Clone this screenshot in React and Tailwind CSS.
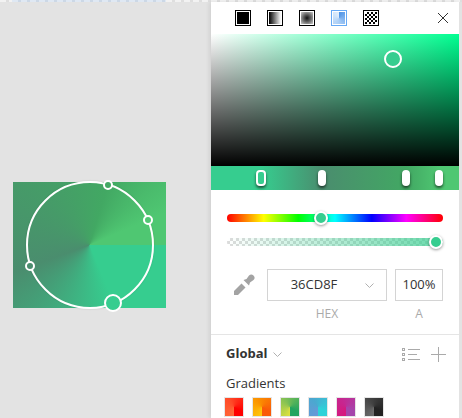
import React from 'react';

const font = { fontFamily: '"Open Sans", sans-serif' };

const Chevron = () => (
    <svg viewBox="0 0 9 5" className="w-[9px] h-[5px]" fill="none" stroke="#b0b0b0" strokeWidth="1">
        <path d="M0.5 0.5 L4.5 4.5 L8.5 0.5" />
    </svg>
);

const Handle = ({ className }) => (
    <div className={`absolute rounded-full border-2 border-white -translate-x-1/2 -translate-y-1/2 ${className}`} />
);

const Stop = ({ className = 'w-[8px] bg-white' }) => (
    <div className={`h-[16px] rounded-[4px] border-2 border-white shadow-[0_2px_3px_rgba(0,0,0,0.6)] ${className}`} />
);

const FillTypes = () => (
    <div className="flex items-center gap-[16px] pl-[24px]">
        <div className="w-[16px] h-[16px] border border-black p-px">
            <div className="w-full h-full bg-black" />
        </div>
        <div className="w-[16px] h-[16px] border border-black p-px">
            <div className="w-full h-full bg-[linear-gradient(90deg,#000,#fff)]" />
        </div>
        <div className="w-[16px] h-[16px] border border-black p-px">
            <div className="w-full h-full bg-[radial-gradient(circle,#111,#ccc)]" />
        </div>
        <div className="w-[16px] h-[16px] border border-[#66a9f5] p-px">
            <div className="w-full h-full bg-[conic-gradient(#4f94e6_0deg,#a9cdf6_180deg,#e3effc_360deg)]" />
        </div>
        <div className="w-[16px] h-[16px] border border-black p-px">
            <div className="w-full h-full bg-[repeating-conic-gradient(#000_0_25%,#fff_0_50%)] bg-[length:4px_4px]" />
        </div>
    </div>
);

const swatches = [
    'bg-[conic-gradient(from_180deg,#ff6a3a_0deg,#ff4a28_150deg,#ff0000_300deg,#ff0000_360deg)]',
    'bg-[conic-gradient(from_180deg,#ffc80c_0deg,#fb9200_150deg,#fa5a08_300deg,#fa5a08_360deg)]',
    'bg-[conic-gradient(from_180deg,#dfe13f_0deg,#7fbf55_150deg,#22a45f_300deg,#22a45f_360deg)]',
    'bg-[conic-gradient(from_180deg,#6a97d8_0deg,#4aa8d0_150deg,#2ed2d8_300deg,#2ed2d8_360deg)]',
    'bg-[conic-gradient(from_180deg,#d8177c_0deg,#c62690_150deg,#a545ab_300deg,#a545ab_360deg)]',
    'bg-[conic-gradient(from_180deg,#6e6e6e_0deg,#444444_150deg,#222222_300deg,#222222_360deg)]',
];

export default function App() {
    return (
        <div className="w-[462px] h-[418px] overflow-hidden bg-[#e3e3e3] flex flex-col" style={font}>
            {/* ruler along the top */}
            <div className="h-[2px] flex shrink-0">
                <div className="w-[12px] bg-[repeating-linear-gradient(90deg,#f2f2f2_0_6px,#dedede_6px_9px)]" />
                <div className="w-[154px] bg-[repeating-linear-gradient(90deg,#dfe8f3_0_6px,#ccd8e6_6px_9px)]" />
                <div className="flex-1 bg-[repeating-linear-gradient(90deg,#f2f2f2_0_6px,#dedede_6px_9px)]" />
            </div>

            <div className="flex flex-1 min-h-0">
                {/* canvas with the selected shape */}
                <div className="w-[211px] shrink-0 pl-[13px] pt-[180px]">
                    <div className="relative w-[153px] h-[126px] bg-[conic-gradient(from_90deg,#36cd8f_0deg,#36cd8f_67deg,#4a8d6e_160deg,#42a863_287deg,#4fc772_337deg,#4fc772_360deg)]">
                        <div className="absolute left-[13px] top-[-1px] w-[128px] h-[128px] rounded-full border-2 border-white shadow-[0_0_2px_rgba(0,0,0,0.15)]" />
                        <Handle className="left-[95px] top-[3px] w-[10px] h-[10px] bg-[#42a863]" />
                        <Handle className="left-[135px] top-[38px] w-[10px] h-[10px] bg-[#4fc772]" />
                        <Handle className="left-[17px] top-[84px] w-[10px] h-[10px] bg-[#4a8d6e]" />
                        <Handle className="left-[100px] top-[121px] w-[18px] h-[18px] bg-[#36cd8f]" />
                    </div>
                </div>

                {/* colour picker panel */}
                <div className="w-[248px] shrink-0 bg-white shadow-[-2px_0_4px_rgba(0,0,0,0.08)] flex flex-col">
                    <div className="h-[32px] flex items-center justify-between">
                        <FillTypes />
                        <svg viewBox="0 0 10 10" className="w-[10px] h-[10px] mr-[11px]" fill="none" stroke="#333" strokeWidth="1">
                            <path d="M0 0 L10 10 M10 0 L0 10" />
                        </svg>
                    </div>

                    <div className="relative h-[132px] bg-[linear-gradient(to_top,#000,transparent),linear-gradient(to_right,#fff,#00ff91)]">
                        <Handle className="left-[182px] top-[25px] w-[18px] h-[18px] bg-[#36cd8f]" />
                    </div>

                    <div className="h-[24px] flex items-center pl-[45px] bg-[linear-gradient(90deg,#36cd8f_0%,#36cd8f_20%,#4a8d6e_45%,#42a863_79%,#4fc772_92%)]">
                        <Stop className="w-[10px] rounded-[3px] bg-[#36cd8f]" />
                        <div className="ml-[52px]"><Stop /></div>
                        <div className="ml-[76px]"><Stop /></div>
                        <div className="ml-[25px]"><Stop /></div>
                    </div>

                    <div className="px-[16px] pt-[24px]">
                        <div className="relative h-[8px] rounded-full bg-[linear-gradient(90deg,#ff0000,#ffff00_17%,#00ff00_33%,#00ffff_50%,#0000ff_67%,#ff00ff_83%,#ff0000)]">
                            <Handle className="left-[94px] top-[4px] w-[14px] h-[14px] bg-[#36cd8f] shadow-[0_1px_3px_rgba(0,0,0,0.4)]" />
                        </div>
                        <div className="relative h-[8px] mt-[16px] rounded-full bg-[linear-gradient(90deg,rgba(54,205,143,0),rgba(54,205,143,0.75)),repeating-conic-gradient(#dcdcdc_0_25%,#fff_0_50%)] bg-[length:auto,6px_6px]">
                            <Handle className="left-[209px] top-[4px] w-[14px] h-[14px] bg-[#36cd8f] shadow-[0_1px_3px_rgba(0,0,0,0.4)]" />
                        </div>
                    </div>

                    <div className="flex pl-[22px] pr-[16px] pt-[23px]">
                        <svg viewBox="0 0 22 22" className="w-[22px] h-[22px] mt-[5px]" fill="#a3a3a3">
                            <path d="M10.5 6 L13.5 5 L16 1.5 a3 3 0 0 1 4.5 4.5 L17 8.5 L16 11.5 Z" />
                            <path d="M8.5 9.5 L12.5 13.5 L5 21 L1 21 L1 17 Z" />
                        </svg>
                        <div className="ml-[12px] w-[120px]">
                            <div className="relative h-[32px] border border-[#d4d4d4] flex items-center justify-center text-[13px] text-[#333] pr-[26px]">
                                36CD8F
                                <div className="absolute right-[12px] top-[13px]"><Chevron /></div>
                            </div>
                            <div className="text-center text-[12px] text-[#aaa] pt-[4px]">HEX</div>
                        </div>
                        <div className="ml-[8px] w-[48px]">
                            <div className="h-[32px] border border-[#d4d4d4] flex items-center justify-center text-[13px] text-[#333]">100%</div>
                            <div className="text-center text-[12px] text-[#aaa] pt-[4px]">A</div>
                        </div>
                    </div>

                    <div className="mt-[11px] border-t border-[#e5e5e5] pl-[14px] pr-[13px] pt-[8px]">
                        <div className="flex items-center h-[22px]">
                            <span className="text-[13px] font-bold text-[#333] ml-px">Global</span>
                            <div className="ml-[6px]"><Chevron /></div>
                            <svg viewBox="0 0 18 13" className="w-[18px] h-[13px] ml-auto" fill="none" stroke="#aaa" strokeWidth="1">
                                <path d="M6 1.5 H18 M6 6.5 H15 M6 11.5 H18" />
                                <rect x="0.5" y="0.5" width="2" height="2" />
                                <rect x="0.5" y="5.5" width="2" height="2" />
                                <rect x="0.5" y="10.5" width="2" height="2" />
                            </svg>
                            <svg viewBox="0 0 15 15" className="w-[15px] h-[15px] ml-[11px]" fill="none" stroke="#aaa" strokeWidth="1">
                                <path d="M7.5 0 V15 M0 7.5 H15" />
                            </svg>
                        </div>
                        <div className="text-[13px] leading-[21px] text-[#333] mt-[8px] ml-px">Gradients</div>
                        <div className="flex gap-[10px] mt-[4px]">
                            {swatches.map((bg, i) => (
                                <div key={i} className={`w-[18px] h-[18px] shrink-0 outline outline-1 outline-[#e5e5e5] ${bg}`} />
                            ))}
                        </div>
                    </div>
                </div>

                <div className="w-[3px] shrink-0 bg-[#e3e3e3]" />
            </div>
        </div>
    );
}
